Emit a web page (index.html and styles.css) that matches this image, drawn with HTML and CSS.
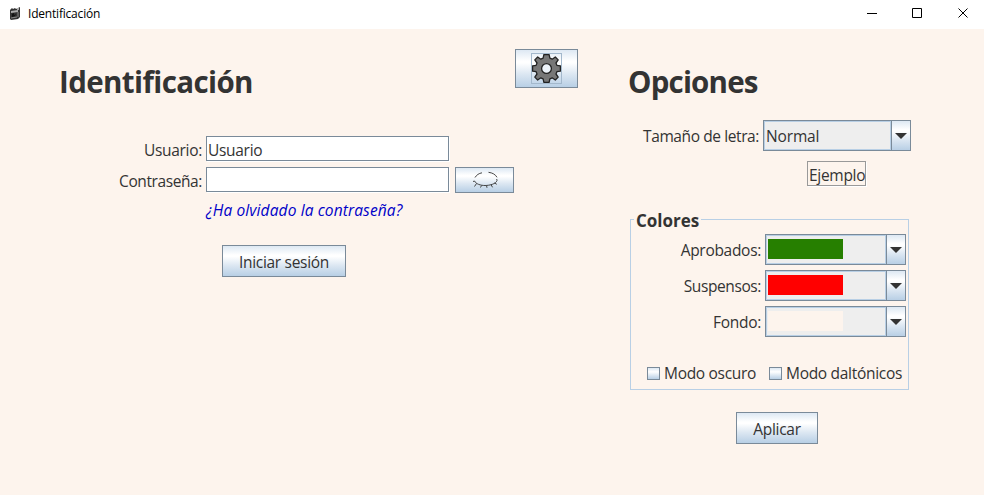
FILE: index.html
```html
<!DOCTYPE html>
<html lang="es">
<head>
<meta charset="utf-8">
<title>Identificación</title>
<link rel="stylesheet" href="styles.css">
</head>
<body>
<header class="titlebar">
  <svg class="app-icon" width="12" height="14" viewBox="0 0 12 14"><path d="M1 3l2-2 1 1 2-1 1 1 4-2v10l-2 2-7 1-1-1z" fill="#333"/><path d="M2 4l7-1v2l-7 1zM8 1h2v2H8z" fill="#aaa"/><path d="M3 7l2-1v2l2-1-1 2-3 1z" fill="#111"/><path d="M2 11l6-1M9 5v5" stroke="#888"/></svg>
  <span class="app-name">Identificación</span>
  <svg class="controls" width="104" height="12" viewBox="0 0 104 12" fill="none" stroke="#000"><path d="M1 6.500h10M46.500 1.500h9v9h-9zM92.500 1.500l9 9M101.500 1.500l-9 9"/></svg>
</header>
<main class="content">
  <section class="login">
    <h1><span class="t-ident">Identificación</span></h1>
    <div class="row user"><label class="t-user">Usuario:</label><div class="field"><span class="t-userv">Usuario</span></div></div>
    <div class="row pass"><label class="t-pass">Contraseña:</label><div class="field"></div>
      <button class="metal eye"><svg width="28" height="18" viewBox="0 0 28 18" fill="none" stroke="#333" stroke-width=".9"><path d="M4 6.500C5.500 4 8 2.300 11 1.800M17.500 1.300c4 .5 7 2.200 8.500 5M2 10.500l1.500-.5c1.500 3 6 4.500 10.500 4.500s11-1.500 12-5l-.3-1.500M5.500 12.500L3.500 15.500M10.500 14.500l-1 2M15.500 14.500l.5 2.300M20 13.500l1.500 2.800M23.500 12l2.300 1.300"/></svg></button></div>
    <a class="forgot"><span class="t-forgot">¿Ha olvidado la contraseña?</span></a>
    <button class="metal signin"><span class="t-sign">Iniciar sesión</span></button>
  </section>
  <button class="metal gear"><span class="gear-focus"><svg width="29" height="29" viewBox="-14.500 -14.500 29 29"><g fill="#777" stroke="#222" stroke-width="1.300" stroke-linejoin="round"><path d="M-2.600 -13.900H2.600L3.400 -10.300L5.700 -9.300L8.800 -11.500L11.700 -8.600L9.500 -5.500L10.400 -3.200L13.900 -2.600V2.600L10.400 3.200L9.500 5.500L11.700 8.600L8.800 11.500L5.700 9.300L3.400 10.300L2.600 13.900H-2.600L-3.400 10.300L-5.700 9.300L-8.800 11.500L-11.700 8.600L-9.500 5.500L-10.400 3.200L-13.900 2.600V-2.600L-10.400 -3.200L-9.500 -5.500L-11.700 -8.600L-8.800 -11.500L-5.700 -9.300L-3.400 -10.300Z"/><circle r="4.900" fill="#edf3fa"/></g></svg></span></button>
  <section class="options">
    <h1><span class="t-opt">Opciones</span></h1>
    <div class="row size"><label class="t-size">Tamaño de letra:</label><div class="combo wide"><div class="value"><span class="t-normal">Normal</span></div><div class="arrow"></div></div></div>
    <div class="sample"><span class="t-sample">Ejemplo</span></div>
    <fieldset>
      <legend><span class="t-colors">Colores</span></legend>
      <div class="row"><label class="t-apr">Aprobados:</label><div class="combo"><div class="value"><i class="swatch green"></i></div><div class="arrow"></div></div></div>
      <div class="row"><label class="t-sus">Suspensos:</label><div class="combo"><div class="value"><i class="swatch red"></i></div><div class="arrow"></div></div></div>
      <div class="row"><label class="t-fon">Fondo:</label><div class="combo"><div class="value"><i class="swatch base"></i></div><div class="arrow"></div></div></div>
      <div class="checks"><i class="check"></i><span class="dark"><span class="t-dark">Modo oscuro</span></span><i class="check"></i><span class="t-dalt">Modo daltónicos</span></div>
    </fieldset>
    <button class="metal apply"><span class="t-apply">Aplicar</span></button>
  </section>
</main>
</body>
</html>
```

FILE: styles.css
```css
* { box-sizing: border-box; }
body { margin: 0; width: 984px; height: 495px; overflow: hidden; background: #fdf4ed; color: #333; font: 15.5px/20px "Open Sans", "Noto Sans", sans-serif; letter-spacing: -0.3px; }
span, label { white-space: nowrap; }
svg { display: block; }
.titlebar { height: 29px; background: #fff; display: flex; align-items: flex-start; padding: 7px 14px 0 9px; color: #000; }
.app-icon { width: 12px; margin-right: 7px; }
.app-name { font-size: 12px; line-height: 14px; letter-spacing: -0.2px; }
.controls { margin: 0 0 0 auto; }
.content { display: flex; align-items: flex-start; }
.login { width: 515px; height: 466px; }
h1 { margin: 0; font-size: 29.5px; font-weight: 700; line-height: 40px; }
.t-ident { letter-spacing: -0.6px; }
.t-opt { letter-spacing: -0.8px; }
.t-pass, .t-sus { letter-spacing: -0.4px; }
.t-size { letter-spacing: -0.4px; }
.t-forgot { letter-spacing: 0.12px; }
.t-normal { letter-spacing: -0.15px; }
.login h1 { padding: 33px 0 0 59px; }
.row { display: flex; align-items: center; justify-content: flex-end; }
.login .row { justify-content: flex-start; align-items: flex-start; height: 25px; }
.login .user { margin-top: 34px; }
.login .pass { margin-top: 6px; }
.login label { width: 202px; margin-right: 4px; text-align: right; line-height: 28px; }
.field { width: 243px; height: 25px; border: 1px solid #7a8a99; background: #fff; box-shadow: 1px 1px 0 #fff; padding-left: 1px; line-height: 27px; }
.metal { display: flex; align-items: center; justify-content: center; padding: 0; border: 1px solid #7a8a99; background: linear-gradient(#dde8f3 0%, #fff 30%, #fff 35%, #dce7f2 65%, #b8cfe5 100%); color: #333; font: inherit; letter-spacing: inherit; }
.eye { width: 59px; height: 26px; margin-left: 6px; }
.forgot { display: block; margin: 8px 0 0 206px; line-height: 20px; height: 20px; font-style: italic; color: #0000c8; }
.signin { width: 124px; height: 32px; margin: 25px 0 0 222px; padding-top: 2px; }
.gear { width: 63px; height: 39px; margin-top: 20px; }
.gear-focus { width: 31px; height: 31px; border: 1px solid #a3b8cc; }
.options { width: 281px; margin-left: 50px; }
.options h1 { padding-top: 33px; }
.size { margin-top: 18px; width: 283px; }
.row label { margin-right: 4px; }
.combo { display: flex; width: 141px; height: 31px; border: 1px solid #7a8a99; }
.combo.wide { width: 148px; }
.value { flex: 1; border: 1px solid #b8cfe5; background: #eee; display: flex; align-items: center; padding-left: 1px; }
.combo:not(.wide) .value { align-items: flex-start; padding: 3px 0 0 1px; }
.arrow { width: 19px; border-left: 1px solid #7a8a99; background: linear-gradient(#dde8f3 0%, #fff 30%, #fff 35%, #dce7f2 65%, #b8cfe5 100%); }
.arrow::before { content: ""; display: block; width: 12px; height: 6px; margin: 12px 0 0 3px; background: #333; clip-path: polygon(0 0, 100% 0, 50% 100%); }
.sample { width: 59px; height: 25px; margin: 10px 0 0 179px; border: 1px solid #999; box-shadow: 1px 1px 0 #fff; padding-left: 1px; line-height: 27px; }
fieldset { width: 279px; height: 180px; margin: 24px 0 0 2px; padding: 5px 2px 0 0; border: 1px solid #b8cfe5; min-width: 0; }
legend { margin-left: 3px; padding: 0 2px; width: 67px; height: 19px; line-height: 22px; font-size: 17px; font-weight: 700; letter-spacing: 0; }
fieldset .row { margin-bottom: 5px; height: 31px; }
.checks { display: flex; align-items: center; margin: 26px 0 0 16px; height: 20px; }
.check { flex: none; width: 13px; height: 13px; margin-right: 4px; border: 1px solid #7a8a99; background: linear-gradient(#dde8f3, #fff 35%, #b8cfe5); }
.dark { width: 105px; }
.swatch { width: 75px; height: 20px; }
.green { background: #267f00; }
.red { background: #f00; }
.base { background: #fdf4ed; }
.apply { width: 82px; height: 32px; margin: 22px 0 0 108px; padding-top: 2px; }
```
